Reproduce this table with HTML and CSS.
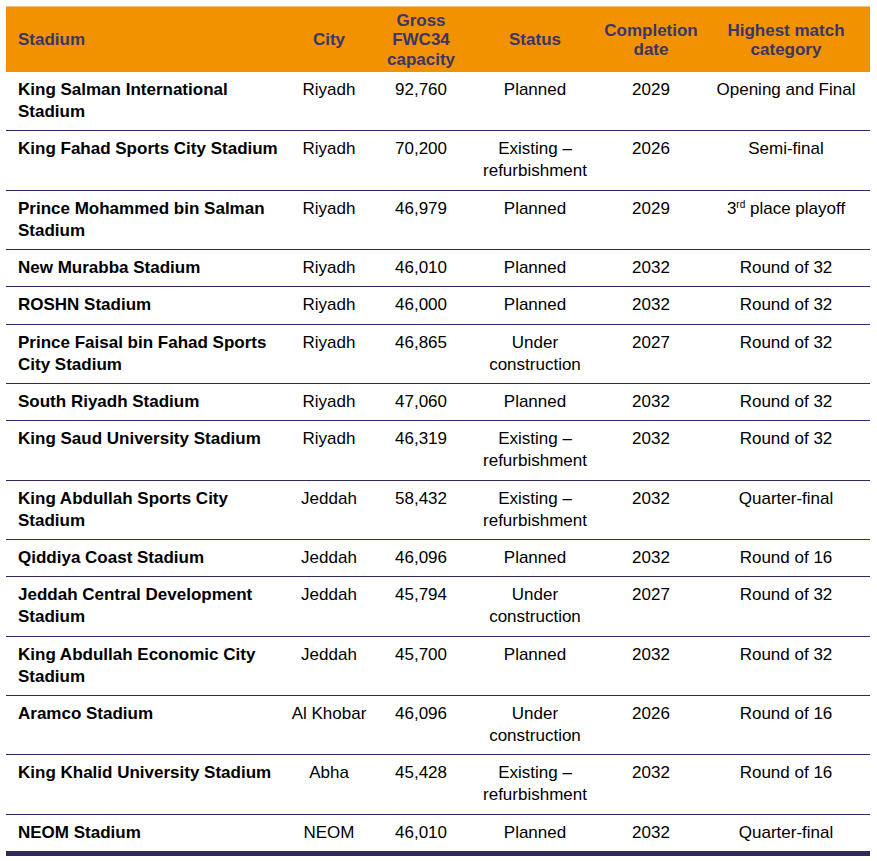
FILE: index.html
```html
<!DOCTYPE html>
<html>
<head>
<meta charset="utf-8">
<link rel="stylesheet" href="styles.css">
</head>
<body>
<div class="wrap">
<table class="stadiums">
  <colgroup>
    <col class="c-name"><col class="c-city"><col class="c-cap"><col class="c-status"><col class="c-date"><col class="c-cat">
  </colgroup>
  <thead>
    <tr>
      <th class="name">Stadium</th>
      <th>City</th>
      <th>Gross FWC34 capacity</th>
      <th>Status</th>
      <th>Completion date</th>
      <th class="cat">Highest match category</th>
    </tr>
  </thead>
  <tbody>
    <tr><td class="name">King Salman International Stadium</td><td class="city">Riyadh</td><td>92,760</td><td>Planned</td><td>2029</td><td class="cat">Opening and Final</td></tr>
    <tr><td class="name">King Fahad Sports City Stadium</td><td class="city">Riyadh</td><td>70,200</td><td>Existing – refurbishment</td><td>2026</td><td class="cat">Semi-final</td></tr>
    <tr><td class="name">Prince Mohammed bin Salman Stadium</td><td class="city">Riyadh</td><td>46,979</td><td>Planned</td><td>2029</td><td class="cat">3<sup>rd</sup> place playoff</td></tr>
    <tr><td class="name">New Murabba Stadium</td><td class="city">Riyadh</td><td>46,010</td><td>Planned</td><td>2032</td><td class="cat">Round of 32</td></tr>
    <tr><td class="name">ROSHN Stadium</td><td class="city">Riyadh</td><td>46,000</td><td>Planned</td><td>2032</td><td class="cat">Round of 32</td></tr>
    <tr><td class="name">Prince Faisal bin Fahad Sports City Stadium</td><td class="city">Riyadh</td><td>46,865</td><td>Under construction</td><td>2027</td><td class="cat">Round of 32</td></tr>
    <tr><td class="name">South Riyadh Stadium</td><td class="city">Riyadh</td><td>47,060</td><td>Planned</td><td>2032</td><td class="cat">Round of 32</td></tr>
    <tr><td class="name">King Saud University Stadium</td><td class="city">Riyadh</td><td>46,319</td><td>Existing – refurbishment</td><td>2032</td><td class="cat">Round of 32</td></tr>
    <tr><td class="name">King Abdullah Sports City Stadium</td><td class="city">Jeddah</td><td>58,432</td><td>Existing – refurbishment</td><td>2032</td><td class="cat">Quarter-final</td></tr>
    <tr><td class="name">Qiddiya Coast Stadium</td><td class="city">Jeddah</td><td>46,096</td><td>Planned</td><td>2032</td><td class="cat">Round of 16</td></tr>
    <tr><td class="name">Jeddah Central Development Stadium</td><td class="city">Jeddah</td><td>45,794</td><td>Under construction</td><td>2027</td><td class="cat">Round of 32</td></tr>
    <tr><td class="name">King Abdullah Economic City Stadium</td><td class="city">Jeddah</td><td>45,700</td><td>Planned</td><td>2032</td><td class="cat">Round of 32</td></tr>
    <tr><td class="name">Aramco Stadium</td><td class="city">Al Khobar</td><td>46,096</td><td>Under construction</td><td>2026</td><td class="cat">Round of 16</td></tr>
    <tr><td class="name">King Khalid University Stadium</td><td class="city">Abha</td><td>45,428</td><td>Existing – refurbishment</td><td>2032</td><td class="cat">Round of 16</td></tr>
    <tr><td class="name">NEOM Stadium</td><td class="city">NEOM</td><td>46,010</td><td>Planned</td><td>2032</td><td class="cat">Quarter-final</td></tr>
  </tbody>
</table>
</div>
</body>
</html>
```

FILE: styles.css
```css
html, body {
  margin: 0;
  padding: 0;
  background: #ffffff;
}

.wrap {
  padding: 6px 7px 0 6px;
}

.stadiums {
  width: 864px;
  table-layout: fixed;
  border-collapse: collapse;
  font-family: "Liberation Sans", Arial, sans-serif;
  font-size: 17px;
  color: #000000;
  border-bottom: 5px solid #2e2a5c;
}

.c-name { width: 284px; }
.c-city { width: 78px; }
.c-cap { width: 106px; }
.c-status { width: 122px; }
.c-date { width: 110px; }
.c-cat { width: 164px; }

.stadiums thead th {
  background: #f39200;
  border-top: 1px solid #f6c07a;
  color: #3a3668;
  font-weight: bold;
  line-height: 19.5px;
  height: 64px;
  padding: 1px 6px 0 6px;
  vertical-align: middle;
  text-align: center;
}

.stadiums thead th.name {
  text-align: left;
  padding-left: 12px;
}

.stadiums tbody td {
  padding: 7px 6px 7.33px 6px;
  line-height: 22px;
  vertical-align: top;
  text-align: center;
  border-bottom: 1px solid #2e2a5c;
}

.stadiums tbody tr:last-child td {
  border-bottom: none;
}

.stadiums tbody td.name {
  text-align: left;
  font-weight: bold;
  padding-left: 12px;
  padding-right: 4px;
}

.stadiums tbody td.city {
  padding-left: 1px;
  padding-right: 1px;
}

.stadiums .cat {
  padding-right: 8px;
  padding-left: 4px;
}

.stadiums sup {
  font-size: 10px;
  line-height: 0;
  vertical-align: 6px;
}
```
